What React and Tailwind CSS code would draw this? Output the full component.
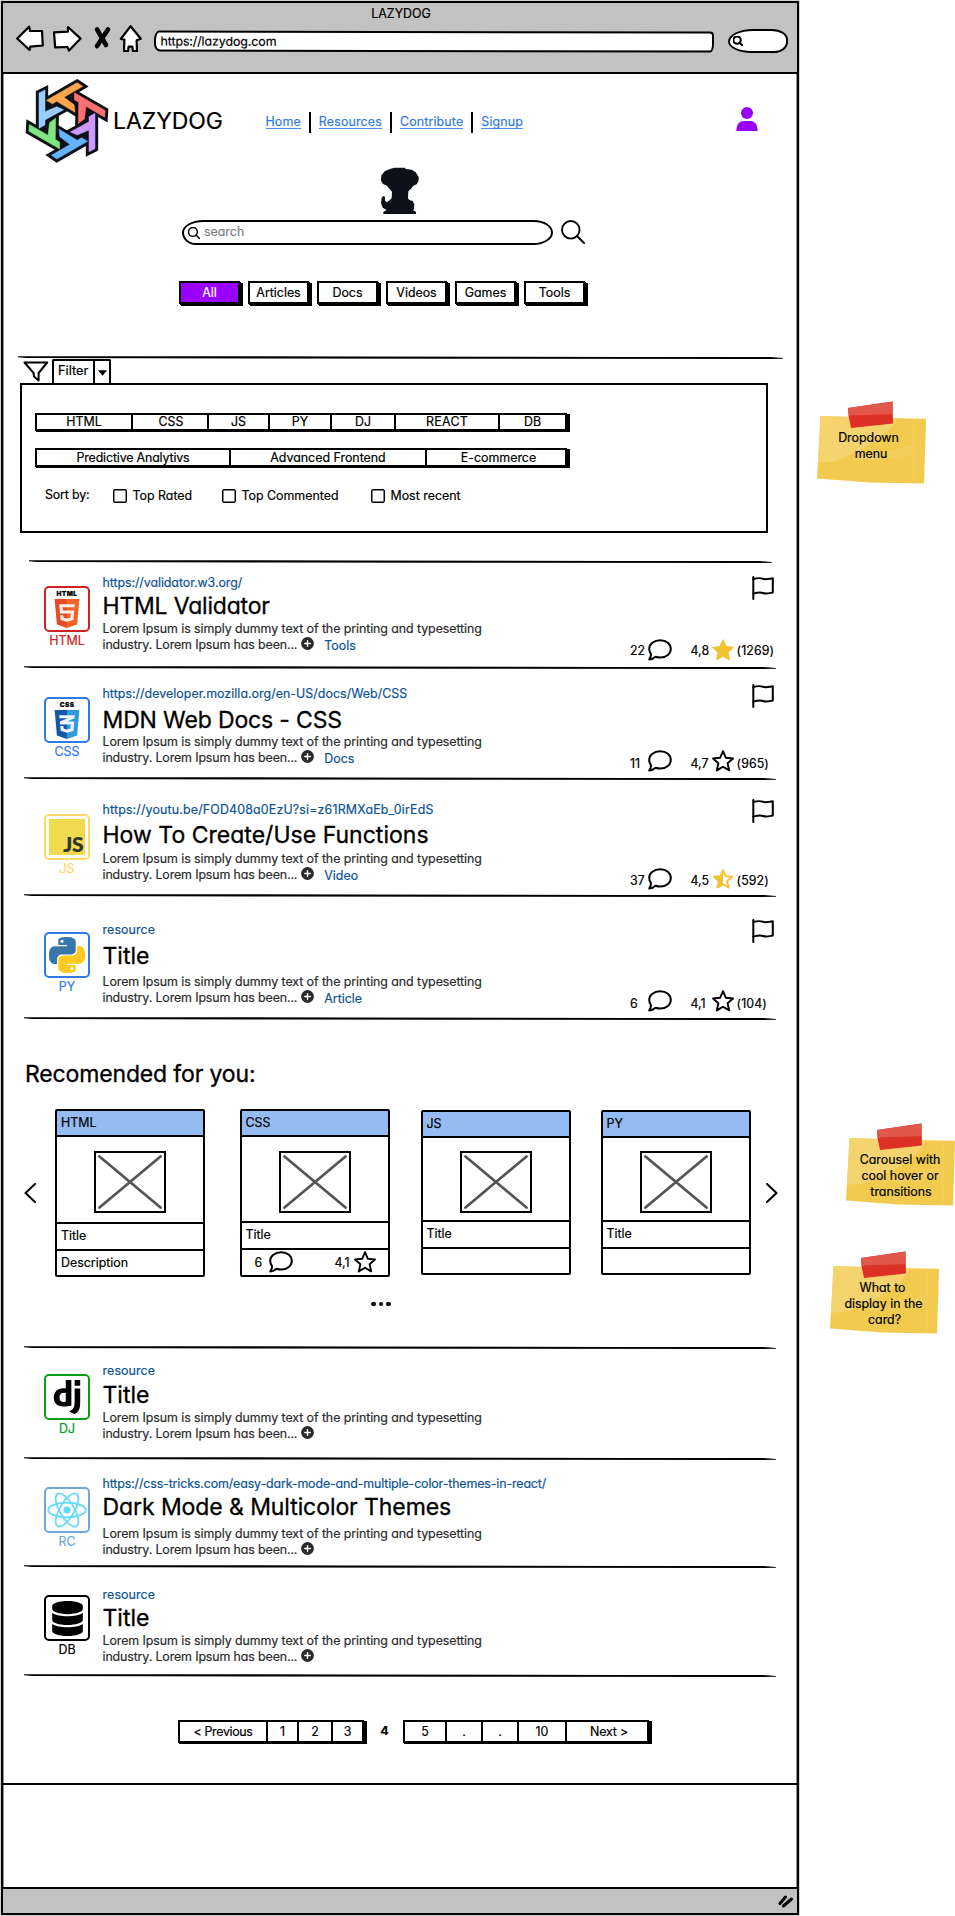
import { FaHtml5, FaCss3Alt, FaDatabase } from "react-icons/fa";
import { SiDjango } from "react-icons/si";

const LOREM_1 = "Lorem Ipsum is simply dummy text of the printing and typesetting";
const LOREM_2 = "industry. Lorem Ipsum has been...";

/* ---------- drawings ---------- */

function Rule({ className = "" }) {
  return (
    <svg className={`block h-[3px] shrink-0 ${className}`} viewBox="0 0 750 3" preserveAspectRatio="none" aria-hidden="true">
      <path d="M0 0.2 L330 0.4 L600 0.9 L738 1.1 L750 2 L750 2.8 L735 3 L420 2.8 L250 2.5 L8 2 L0 1.2 Z" fill="#000" />
    </svg>
  );
}

function BladeLogo() {
  const blade = "M117 276 L135 267 L135 332 L170 317 L191 326 L135 357 L135 372 L117 382 Z";
  const colors = ["#99ccff", "#ffa64d", "#ff7070", "#cc99ff", "#66b3ff", "#80e680"];
  return (
    <svg className="mt-px h-[80px] w-[86px] shrink-0 overflow-visible" viewBox="72 240 258 240" aria-hidden="true">
      <circle cx="201" cy="359.5" r="66" fill="none" stroke="#0d1117" strokeWidth="16" />
      {colors.map((c, i) => (
        <path key={`o${c}`} d={blade} transform={`rotate(${i * 60} 201 359.5)`} fill="none" stroke="#0d1117" strokeWidth="19" strokeMiterlimit="3" />
      ))}
      {colors.map((c, i) => (
        <path key={c} d={blade} transform={`rotate(${i * 60} 201 359.5)`} fill={c} stroke={c} strokeWidth="1.5" />
      ))}
    </svg>
  );
}

function Dog() {
  return (
    <svg className="h-[47px] w-[38px]" viewBox="1143 500 114 141" aria-hidden="true">
      <path
        fill="#0d1117"
        d="M1183 502 L1214 502 L1218 506 L1235 508 L1247 516 L1256 530 L1256 541 L1250 552 L1240 556 L1232 567 L1225 573 L1224 594 L1228 599 L1238 602 L1243 612 L1242 625 L1239 630 L1248 634 L1248 641 L1150 641 L1150 635 L1160 629 L1148 622 L1143 608 L1145 592 L1150 587 L1155 589 L1155 601 L1161 606 L1170 598 L1175 594 L1176 574 L1166 563 L1161 556 L1149 551 L1143 541 L1144 525 L1155 512 L1170 506 Z"
      />
    </svg>
  );
}

function Magnifier({ className, width = 2 }) {
  return (
    <svg className={className} viewBox="0 0 24 24" fill="none" stroke="currentColor" strokeWidth={width} strokeLinecap="round" aria-hidden="true">
      <circle cx="9.8" cy="9.8" r="8.8" />
      <path d="M16 16 L23 23" />
    </svg>
  );
}

function Flag() {
  return (
    <svg className="h-[24px] w-[22px]" viewBox="0 0 22 24" fill="none" stroke="#000" strokeWidth="2" strokeLinejoin="round" strokeLinecap="round" aria-hidden="true">
      <path d="M1.3 1 V23" />
      <path d="M1.3 3 C5 2 8 1.6 11 2.8 C14 3.9 17 2.8 20.8 2.3 V16.5 C17 17.2 14 18.2 11 17 C8 15.8 5 16.6 1.3 17.6" />
    </svg>
  );
}

function Comment() {
  return (
    <svg className="h-[22px] w-[24px] shrink-0" viewBox="0 0 24 22" fill="none" stroke="#000" strokeWidth="2" strokeLinejoin="round" aria-hidden="true">
      <path d="M12.2 1.2 C18.5 1.2 22.8 5 22.8 9.8 C22.8 14.8 18.5 18.5 12.4 18.5 C10.6 18.5 9 18.2 7.6 17.7 C5.8 19.3 3.8 20.3 1.2 20.5 C2.4 18.7 3.2 17 3 15.2 C1.8 13.6 1.2 11.8 1.2 9.8 C1.2 5 6 1.2 12.2 1.2 Z" />
    </svg>
  );
}

const STAR = "M11 1.2 L13.9 7.8 L21 8.5 L15.6 13.2 L17.2 20.4 L11 16.7 L4.8 20.4 L6.4 13.2 L1 8.5 L8.1 7.8 Z";

function Star({ kind }) {
  if (kind === "full") {
    return (
      <svg className="h-[22px] w-[22px] shrink-0" viewBox="0 0 22 22" aria-hidden="true">
        <path d={STAR} fill="#f1c232" stroke="#f1c232" strokeWidth="1.6" strokeLinejoin="round" />
      </svg>
    );
  }
  if (kind === "half") {
    return (
      <svg className="h-[22px] w-[22px] shrink-0" viewBox="-1 -1 24 24" aria-hidden="true">
        <path d={STAR} fill="none" stroke="#f1c232" strokeWidth="2" strokeLinejoin="round" />
        <path d="M11 1.2 L11 16.7 L4.8 20.4 L6.4 13.2 L1 8.5 L8.1 7.8 Z" fill="#f1c232" />
      </svg>
    );
  }
  return (
    <svg className="h-[22px] w-[22px] shrink-0" viewBox="0 0 22 22" aria-hidden="true">
      <path d={STAR} fill="none" stroke="#000" strokeWidth="1.9" strokeLinejoin="round" />
    </svg>
  );
}

function PlusDot() {
  return (
    <svg className="ml-[3.5px] size-[13px] shrink-0" viewBox="0 0 13 13" aria-hidden="true">
      <circle cx="6.5" cy="6.5" r="6.4" fill="#2b2b2b" />
      <path d="M6.5 3.7 V9.3 M3.7 6.5 H9.3" stroke="#fff" strokeWidth="1.4" strokeLinecap="round" />
    </svg>
  );
}

function PythonMark() {
  return (
    <svg className="size-[36px]" viewBox="0 0 24 24" aria-hidden="true">
      <path
        fill="#3776ab"
        d="M14.25.18l.9.2.73.26.59.3.45.32.34.34.25.34.16.33.1.3.04.26.02.2-.01.13V8.5l-.05.63-.13.55-.21.46-.26.38-.3.31-.33.25-.35.19-.35.14-.33.1-.3.07-.26.04-.21.02H8.77l-.69.05-.59.14-.5.22-.41.27-.33.32-.27.35-.2.36-.15.37-.1.35-.07.32-.04.27-.02.21v3.06H3.17l-.21-.03-.28-.07-.32-.12-.35-.18-.36-.26-.36-.36-.35-.46-.32-.59-.28-.73-.21-.88-.14-1.05-.05-1.23.06-1.22.16-1.04.24-.87.32-.71.36-.57.4-.44.42-.33.42-.24.4-.16.36-.1.32-.05.24-.01h.16l.06.01h8.16v-.83H6.18l-.01-2.75-.02-.37.05-.34.11-.31.17-.28.25-.26.31-.23.38-.2.44-.18.51-.15.58-.12.64-.1.71-.06.77-.04.84-.02 1.27.05zm-6.3 1.98l-.23.33-.08.41.08.41.23.34.33.22.41.09.41-.09.33-.22.23-.34.08-.41-.08-.41-.23-.33-.33-.22-.41-.09-.41.09z"
      />
      <path
        fill="#ffca1f"
        d="M21.04 6.11l.28.06.32.12.35.18.36.27.36.35.35.47.32.59.28.73.21.88.14 1.04.05 1.23-.06 1.23-.16 1.04-.24.86-.32.71-.36.57-.4.45-.42.33-.42.24-.4.16-.36.09-.32.05-.24.02-.16-.01h-8.22v.82h5.84l.01 2.76.02.36-.05.34-.11.31-.17.29-.25.25-.31.24-.38.2-.44.17-.51.15-.58.13-.64.09-.71.07-.77.04-.84.01-1.27-.04-1.07-.14-.9-.2-.73-.25-.59-.3-.45-.33-.34-.34-.25-.34-.16-.33-.1-.3-.04-.25-.02-.2.01-.13v-5.34l.05-.64.13-.54.21-.46.26-.38.3-.32.33-.24.35-.2.35-.14.33-.1.3-.06.26-.04.21-.02.13-.01h5.84l.69-.05.59-.14.5-.21.41-.28.33-.32.27-.35.2-.36.15-.36.1-.35.07-.32.04-.28.02-.21V6.07h2.09l.14.01zm-6.47 14.25l-.23.33-.08.41.08.41.23.33.33.23.41.08.41-.08.33-.23.23-.33.08-.41-.08-.41-.23-.33-.33-.23-.41-.08-.41.08z"
      />
    </svg>
  );
}

function ReactMark() {
  return (
    <svg className="size-[40px]" viewBox="-20 -20 40 40" fill="none" stroke="#61dafb" strokeWidth="1.7" aria-hidden="true">
      <circle r="3.6" fill="#61dafb" stroke="none" />
      <ellipse rx="18.8" ry="7.3" />
      <ellipse rx="18.8" ry="7.3" transform="rotate(60)" />
      <ellipse rx="18.8" ry="7.3" transform="rotate(120)" />
    </svg>
  );
}

function ShieldMark({ kind }) {
  const html = kind === "html";
  const Icon = html ? FaHtml5 : FaCss3Alt;
  return (
    <div className="flex flex-col items-center">
      <svg className="absolute size-0" aria-hidden="true">
        <linearGradient id={`shield-${kind}`} x1="0" x2="1" y1="0" y2="0">
          <stop offset="0.5" stopColor={html ? "#e44d26" : "#1459a8"} />
          <stop offset="0.5" stopColor={html ? "#f16529" : "#2f9bdb"} />
        </linearGradient>
      </svg>
      <span className="h-[8px] text-[6.5px] leading-[8px] font-black tracking-[0.4px] text-black">{html ? "HTML" : "CSS"}</span>
      <Icon
        className={
          html
            ? "-my-[1px] h-[33px] w-[26px] bg-[linear-gradient(#f4f0ee,#f4f0ee)] bg-[length:16px_19px] bg-[position:center_7px] bg-no-repeat"
            : "-my-[1px] h-[33px] w-[26px] bg-[linear-gradient(#eef4fb,#eef4fb)] bg-[length:16px_19px] bg-[position:center_7px] bg-no-repeat"
        }
        fill={`url(#shield-${kind})`}
      />
    </div>
  );
}

const MARKS = {
  HTML: <ShieldMark kind="html" />,
  CSS: <ShieldMark kind="css" />,
  JS: (
    <div className="flex size-[36px] items-end justify-end bg-[#f0db4f] pr-[2px]">
      <span className="font-[Lato] text-[21px] leading-[22px] font-black tracking-[-0.5px] text-[#323330]">JS</span>
    </div>
  ),
  PY: <PythonMark />,
  DJ: <SiDjango className="size-[34px] text-black" />,
  RC: <ReactMark />,
  DB: <FaDatabase className="h-[35px] w-[31px] text-black" />,
};

/* ---------- browser chrome ---------- */

function BrowserBar() {
  return (
    <header className="h-[71px] border-b-2 border-black bg-[#c2c2c2]">
      <h1 className="h-[18px] pt-[3px] pl-[2px] text-center leading-[16px]">LAZYDOG</h1>
      <div className="flex pl-[13px]">
        <svg className="mt-[2px] h-[30px] w-[132px] shrink-0" viewBox="0 0 132 30" fill="#fff" stroke="#000" strokeWidth="2.2" strokeLinejoin="round" aria-hidden="true">
          <path d="M1.2 15.5 L13.2 3.6 L14 8 L26 8 L26.8 22.5 L14.2 23.6 L13.6 27 Z" />
          <path d="M38 9.4 L52 8.6 L52 4 L64.6 15.6 L53 27.6 L51.4 24 L39.2 24.4 Z" />
          <path d="M104.8 16 L114.6 3.2 L124.8 15.8 L120.6 17.2 L121 28 L116.8 28 L116.4 23.6 L112.6 23.6 L112 28 L108 28 L108.4 16.6 Z" />
          <path d="M81 6.4 L90 22 M92 6.4 L81 23" fill="none" strokeWidth="4.6" strokeLinecap="round" />
        </svg>
        <div className="mt-[9.5px] ml-[5.5px] h-[21px] w-[560px] rotate-[0.1deg] rounded-[5px_4px_4px_6px/10px_4px_8px_8px] border-2 border-black bg-white pl-[4.5px] leading-[17px] tracking-[-0.08px]">
          https://lazydog.com
        </div>
        <div className="mt-[8px] ml-[14px] flex h-[24px] w-[60px] items-center rounded-[28px_18px_16px_26px/14px_12px_12px_13px] border-2 border-black bg-white pl-[3px]">
          <Magnifier className="size-[10px]" width={5} />
        </div>
      </div>
    </header>
  );
}

/* ---------- page parts ---------- */

function Nav() {
  const links = [
    ["Home", "pr-[8px]"],
    ["Resources", "px-[8px]"],
    ["Contribute", "px-[8px]"],
    ["Signup", "pl-[8px]"],
  ];
  return (
    <nav className="flex h-[86px] pt-[6px] pl-[21px]">
      <BladeLogo />
      <span className="mt-[27px] ml-[3px] w-[152.5px] text-[23px] leading-[28px] tracking-[-0.07px]">LAZYDOG</span>
      <div className="mt-[32px] flex h-[21px]">
        {links.map(([label, pad], i) => (
          <div key={label} className={`flex ${pad} ${i < 3 ? "border-r-2 border-black" : ""}`}>
            <a className="h-[17px] border-b border-[#4a8df0] text-[#2f7ae5] leading-[20px] tracking-[0.16px]">{label}</a>
          </div>
        ))}
      </div>
      <svg className="mt-[27px] ml-[213px] h-[24px] w-[22px]" viewBox="0 0 22 24" fill="#9900ff" aria-hidden="true">
        <circle cx="11" cy="6" r="6" />
        <path d="M0.4 24 C0.4 17 3.5 14 8 14 H14 C18.5 14 21.6 17 21.6 24 Z" />
      </svg>
    </nav>
  );
}

function SearchArea() {
  const tabs = ["All", "Articles", "Docs", "Videos", "Games", "Tools"];
  return (
    <section className="flex h-[196px] flex-col pt-[7px]">
      <div className="pl-[378px]">
        <Dog />
      </div>
      <div className="mt-[6px] flex pl-[179px]">
        <div className="flex h-[25px] w-[371px] items-center rounded-[22px_20px_20px_14px/13px] border-2 border-black bg-white pl-[4px]">
          <Magnifier className="size-[12px]" width={3} />
          <span className="ml-[4px] -mt-[2px] leading-[16px] text-[#7f7f85]">search</span>
        </div>
        <Magnifier className="ml-[7.5px] size-[24px]" width={1.9} />
      </div>
      <div className="mt-[36px] flex gap-[8px] pl-[176px]">
        {tabs.map((t) => (
          <button
            key={t}
            className={`h-[23px] w-[61px] border-2 border-black leading-[18px] shadow-[1px_1px_0_#000,2px_2px_0_#000,3px_2px_0_#000] ${
              t === "All" ? "bg-[#9900ff] text-white" : "bg-white text-black"
            }`}
          >
            {t}
          </button>
        ))}
      </div>
    </section>
  );
}

function ButtonStrip({ cells, className = "" }) {
  return (
    <div className={`flex border-2 border-black bg-white shadow-[1px_1px_0_#000,2px_1px_0_#000,3px_1px_0_#000] ${className}`}>
      {cells.map(([label, size], i) => (
        <div key={`${label}${i}`} className={`flex items-center justify-center ${size} ${i < cells.length - 1 ? "border-r-2 border-black" : ""}`}>
          {label}
        </div>
      ))}
    </div>
  );
}

function Checkbox({ label, className }) {
  return (
    <label className={`flex items-center ${className}`}>
      <span className="size-[14px] rounded-[2px] border-[1.5px] border-black shadow-[inset_0_0_0_0.5px_#000]" />
      <span className="ml-[5.5px] leading-[16px]">{label}</span>
    </label>
  );
}

function FilterArea() {
  return (
    <section>
      <Rule className="ml-[15px] w-[765px]" />
      <div className="flex h-[24px] items-end pl-[20px]">
        <svg className="mb-[1px] h-[21px] w-[26px]" viewBox="0 0 26 21" fill="none" stroke="#000" strokeWidth="2" strokeLinejoin="round" aria-hidden="true">
          <path d="M1.5 1.5 H24.2 L15.6 12 V19.5 L11 15.5 L10.6 12 Z" />
        </svg>
        <div className="ml-[3px] flex h-[24px] w-[59px] rounded-t-[2px] border-2 border-b-0 border-black">
          <span className="w-[41px] border-r-2 border-black pl-[4px] text-[12.8px] leading-[20px]">Filter</span>
          <svg className="mt-[9px] ml-[3px] h-[6px] w-[9px]" viewBox="0 0 10 6" aria-hidden="true">
            <path d="M0 0 H10 L5 6 Z" />
          </svg>
        </div>
      </div>
      <div className="ml-[17px] h-[150px] w-[748px] border-2 border-black pl-[13px]">
        <ButtonStrip
          className="mt-[28px] h-[18px] w-[532px]"
          cells={[["HTML", "w-[96px]"], ["CSS", "w-[76px] pl-[2px]"], ["JS", "w-[61px]"], ["PY", "w-[62px]"], ["DJ", "w-[64px]"], ["REACT", "w-[104px] tracking-[0.3px]"], ["DB", "flex-1"]]}
        />
        <ButtonStrip
          className="mt-[17px] h-[19px] w-[532px]"
          cells={[["Predictive Analytivs", "w-[194px] tracking-[-0.15px]"], ["Advanced Frontend", "w-[196px]"], ["E-commerce", "flex-1 pl-[5px]"]]}
        />
        <div className="mt-[21px] flex pl-[10px]">
          <span className="-mt-[1px] w-[68px] tracking-[-0.15px]">Sort by:</span>
          <Checkbox className="w-[109px]" label="Top Rated" />
          <Checkbox className="w-[149px]" label="Top Commented" />
          <Checkbox className="" label="Most recent" />
        </div>
      </div>
    </section>
  );
}

function Resource({ item }) {
  return (
    <article className={`flex ${item.height}`}>
      <div className={`ml-[41px] flex w-[46px] shrink-0 flex-col items-center ${item.iconTop} ${item.color}`}>
        <div className="flex size-[46px] shrink-0 items-center justify-center rounded-[5px] border-2 border-current">{MARKS[item.lang]}</div>
        <span className="mt-[1px] leading-[16px]">{item.lang}</span>
      </div>
      <div className={`ml-[12.5px] w-[526px] shrink-0 ${item.linkTop}`}>
        <a className={`block leading-[16px] whitespace-nowrap text-[#0b5394] ${item.linkTrack}`}>{item.link}</a>
        <h2 className={`text-[23px] leading-[24px] whitespace-nowrap [-webkit-text-stroke:0.3px] ${item.titleGap} ${item.titleTrack}`}>{item.title}</h2>
        <p className={`leading-[16px] tracking-[-0.07px] whitespace-nowrap text-[#2b2b2b] ${item.descGap}`}>{LOREM_1}</p>
        <div className="flex leading-[16px]">
          <span className="tracking-[-0.12px] text-[#2b2b2b]">{LOREM_2}</span>
          <PlusDot />
          {item.tag && <a className="mt-[1px] ml-[10.5px] text-[#0b5394]">{item.tag}</a>}
        </div>
      </div>
      {item.stats && (
        <div className={`ml-[1.5px] flex w-[144px] shrink-0 flex-col ${item.flagTop}`}>
          <div className="flex justify-end">
            <Flag />
          </div>
          <div className={`flex leading-[16px] whitespace-nowrap ${item.statsGap}`}>
            <span className={`w-[18px] shrink-0 ${item.numTop}`}>{item.stats[0]}</span>
            <Comment />
            <span className={`ml-[18.5px] w-[21px] shrink-0 ${item.numTop}`}>{item.stats[1]}</span>
            <Star kind={item.star} />
            <span className={`ml-[3px] tracking-[0.1px] ${item.numTop}`}>({item.stats[2]})</span>
          </div>
        </div>
      )}
    </article>
  );
}

const TOP_ITEMS = [
  { lang: "HTML", color: "text-[#cc2222]", link: "https://validator.w3.org/", title: "HTML Validator", tag: "Tools", stats: ["22", "4,8", "1269"], star: "full",
    height: "h-[103px]", iconTop: "pt-[23px]", linkTop: "pt-[12px]", linkTrack: "tracking-[-0.06px]", titleGap: "mt-[3px]", titleTrack: "tracking-[-0.2px]", descGap: "mt-[3px]", flagTop: "pt-[13px]", statsGap: "mt-[39px]", numTop: "pt-[4px]" },
  { lang: "CSS", color: "text-[#2f7ae5]", link: "https://developer.mozilla.org/en-US/docs/Web/CSS", title: "MDN Web Docs - CSS", tag: "Docs", stats: ["11", "4,7", "965"], star: "empty",
    height: "h-[108px]", iconTop: "pt-[28px]", linkTop: "pt-[17px]", linkTrack: "tracking-[0.04px]", titleGap: "mt-[6px]", titleTrack: "tracking-[-0.15px]", descGap: "mt-[2px]", flagTop: "pt-[15px]", statsGap: "mt-[42px]", numTop: "pt-[6px]" },
  { lang: "JS", color: "text-[#ffd966]", link: "https://youtu.be/FOD408a0EzU?si=z61RMXaEb_0irEdS", title: "How To Create/Use Functions", tag: "Video", stats: ["37", "4,5", "592"], star: "half",
    height: "h-[114px]", iconTop: "pt-[34px]", linkTop: "pt-[22px]", linkTrack: "tracking-[0.17px]", titleGap: "mt-[5px]", titleTrack: "tracking-[0.02px]", descGap: "mt-[4px]", flagTop: "pt-[19px]", statsGap: "mt-[45px]", numTop: "pt-[5px]" },
  { lang: "PY", color: "text-[#2f7ae5]", link: "resource", title: "Title", tag: "Article", stats: ["6", "4,1", "104"], star: "empty",
    height: "h-[120px]", iconTop: "pt-[35px]", linkTop: "pt-[25px]", linkTrack: "tracking-[0.1px]", titleGap: "mt-[6px]", titleTrack: "tracking-[0px]", descGap: "mt-[6px]", flagTop: "pt-[22px]", statsGap: "mt-[47px]", numTop: "pt-[6px]" },
];

const BOTTOM_ITEMS = [
  { lang: "DJ", color: "text-[#0b9c1a]", link: "resource", title: "Title",
    height: "h-[108px]", iconTop: "pt-[25px]", linkTop: "pt-[14px]", linkTrack: "tracking-[0.1px]", titleGap: "mt-[4px]", titleTrack: "tracking-[0px]", descGap: "mt-[3px]" },
  { lang: "RC", color: "text-[#6fa8dc]", link: "https://css-tricks.com/easy-dark-mode-and-multiple-color-themes-in-react/", title: "Dark Mode & Multicolor Themes",
    height: "h-[105px]", iconTop: "pt-[27px]", linkTop: "pt-[16px]", linkTrack: "tracking-[-0.12px]", titleGap: "mt-[3px]", titleTrack: "tracking-[-0.08px]", descGap: "mt-[7px]" },
  { lang: "DB", color: "text-black", link: "resource", title: "Title",
    height: "h-[106px]", iconTop: "pt-[27px]", linkTop: "pt-[19px]", linkTrack: "tracking-[0.1px]", titleGap: "mt-[3px]", titleTrack: "tracking-[0px]", descGap: "mt-[3px]" },
];

function Placeholder() {
  return (
    <div className="h-[62px] w-[72px] border-2 border-black p-[2px]">
      <svg className="block size-full" viewBox="0 0 64 54" preserveAspectRatio="none" stroke="#555" strokeWidth="2.8" strokeLinecap="round" aria-hidden="true">
        <path d="M1.5 1.5 L62.5 52.5 M62.5 1.5 L1.5 52.5" />
      </svg>
    </div>
  );
}

function Card({ label, wide, className = "", children }) {
  return (
    <div className={`flex w-[150px] shrink-0 flex-col rounded-[2px] border-2 border-black ${wide ? "h-[168px]" : "mt-[1px] h-[165px]"} ${className}`}>
      <div className="h-[26px] border-b-2 border-black bg-[#94bbf2] pl-[4px] leading-[24px]">{label}</div>
      <div className={`flex justify-center border-b-2 border-black ${wide ? "h-[87px] pt-[14px]" : "h-[84px] pt-[13px]"}`}>
        <Placeholder />
      </div>
      <div className={`h-[27px] border-b-2 border-black pl-[4px] ${wide ? "leading-[24px]" : "leading-[23px]"}`}>Title</div>
      <div className="flex flex-1 pl-[4px] leading-[24px]">{children}</div>
    </div>
  );
}

function Carousel() {
  return (
    <section className="h-[326px] pt-[40px]">
      <h2 className="pl-[22px] text-[23px] leading-[28px] tracking-[-0.15px] [-webkit-text-stroke:0.3px]">Recomended for you:</h2>
      <div className="mt-[20.5px] flex h-[170px] pl-[21px]">
        <svg className="mt-[74px] h-[20px] w-[12px]" viewBox="0 0 12 20" fill="none" stroke="#000" strokeWidth="2" strokeLinecap="round" strokeLinejoin="round" aria-hidden="true">
          <path d="M11 1 L1.5 10 L11 19" />
        </svg>
        <div className="mr-[15px] ml-[19px] flex w-[696px]">
          <Card label="HTML" wide>
            Description
          </Card>
          <Card label="CSS" wide className="ml-[34.5px]">
            <span className="w-[23px] pt-[1px] pl-[9px]">6</span>
            <span className="mt-[1px] -mr-[1px]"><Comment /></span>
            <span className="w-[62px] pt-[1px] pr-[4px] text-right">4,1</span>
            <span className="mt-[1px]"><Star kind="empty" /></span>
          </Card>
          <Card label="JS" className="ml-[31px]" />
          <Card label="PY" className="ml-[30px]" />
        </div>
        <svg className="mt-[74px] h-[20px] w-[12px]" viewBox="0 0 12 20" fill="none" stroke="#000" strokeWidth="2" strokeLinecap="round" strokeLinejoin="round" aria-hidden="true">
          <path d="M1 1 L10.5 10 L1 19" />
        </svg>
      </div>
      <div className="mt-[23px] ml-[368px] flex gap-[3px]">
        <i className="size-[4.5px] rounded-full bg-black" />
        <i className="size-[4.5px] rounded-full bg-black" />
        <i className="size-[4.5px] rounded-full bg-black" />
      </div>
    </section>
  );
}

function Pagination() {
  return (
    <div className="flex h-[106px] pt-[43px] pl-[175px]">
      <ButtonStrip
        className="h-[23px] w-[186px]"
        cells={[["< Previous", "w-[88px] tracking-[-0.33px]"], ["1", "w-[31px]"], ["2", "w-[34px]"], ["3", "flex-1"]]}
      />
      <b className="w-[39px] pl-[2px] text-center leading-[22px]">4</b>
      <ButtonStrip
        className="h-[23px] w-[246px]"
        cells={[["5", "w-[42px]"], [".", "w-[36px]"], [".", "w-[36px]"], ["10", "w-[48px]"], ["Next >", "flex-1 pl-[4px] tracking-[-0.17px]"]]}
      />
    </div>
  );
}

function Note({ lines, className }) {
  return (
    <div className={`relative h-[84px] w-[109px] ${className}`}>
      <svg className="absolute inset-0 size-full" viewBox="0 0 109 84" aria-hidden="true">
        <path d="M3.5 15 L109 18 L107 82.5 L52 81.5 L0 77.5 Z" fill="#f1ca4e" />
        <path d="M3.5 15 L80 17 C72 36 50 46 20 60 L1 62 Z" fill="#f5d679" opacity="0.75" />
        <path d="M34 58 C60 52 84 48 95 44 L95 54 C76 58 52 61 34 58 Z" fill="#f5d679" opacity="0.35" />
        <path d="M97 18 V82 M97 18 H109" stroke="#f5d679" strokeWidth="1" opacity="0.6" />
        <path d="M31 7 L75.5 0.5 L76 22.5 L34 27 L31.5 15 Z" fill="#dd3127" />
        <path d="M31 7 L75.5 0.5 L75.7 13 L32 14.5 Z" fill="#e2574c" />
      </svg>
      <div className="relative pt-[28.5px] text-center leading-[16px]">
        {lines.map(([text, shift]) => (
          <p key={text} className={shift}>
            {text}
          </p>
        ))}
      </div>
    </div>
  );
}

export default function App() {
  return (
    <div className="flex h-[1916px] w-[955px] overflow-hidden bg-white pt-px pl-px font-[Inter,'Liberation_Sans',sans-serif] text-[12.4px] leading-[16px] font-normal text-black [-webkit-text-stroke:0.2px] [font-feature-settings:'cv11']">
      <main className="flex h-[1914px] w-[798px] shrink-0 flex-col border-2 border-black shadow-[inset_0_0_0_1px_#9a9a9a,0_0_0_1px_#d4d4d4]">
        <BrowserBar />
        <Nav />
        <SearchArea />
        <FilterArea />
        <Rule className="mt-[27px] ml-[26px] w-[743px]" />
        {TOP_ITEMS.map((item) => (
          <div key={item.lang} className="flex flex-col">
            <Resource item={item} />
            <Rule className="ml-[21px] w-[752px]" />
          </div>
        ))}
        <Carousel />
        <Rule className="ml-[21px] w-[752px]" />
        {BOTTOM_ITEMS.map((item) => (
          <div key={item.lang} className="flex flex-col">
            <Resource item={item} />
            <Rule className="ml-[21px] w-[752px]" />
          </div>
        ))}
        <Pagination />
        <div className="flex-1 border-t-2 border-black" />
        <footer className="flex h-[26px] items-center justify-end border-t-2 border-black bg-[#c2c2c2] pr-[3px]">
          <svg className="h-[14px] w-[16px]" viewBox="0 0 16 14" stroke="#000" strokeWidth="3" strokeLinecap="round" aria-hidden="true">
            <path d="M2 9.5 L7.5 3 M5.5 12 L13.5 5" />
          </svg>
        </footer>
      </main>
      <aside className="flex w-[156px] shrink-0 flex-col">
        <Note className="mt-[400px] ml-[18px]" lines={[["Dropdown", "pr-[6px]"], ["menu", "pr-[1px]"]]} />
        <Note className="mt-[638px] ml-[47px]" lines={[["Carousel with", "pr-[1px]"], ["cool hover or", "pr-[1px]"], ["transitions", "pl-[1px]"]]} />
        <Note className="mt-[44px] ml-[31px]" lines={[["What to", "pr-[4px]"], ["display in the", "pr-[2px]"], ["card?", ""]]} />
      </aside>
    </div>
  );
}
